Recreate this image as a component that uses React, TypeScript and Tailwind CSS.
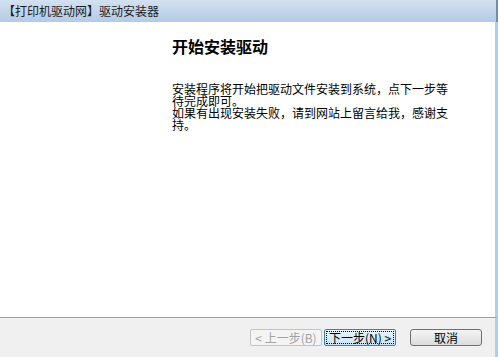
import React from 'react';

const font = { fontFamily: '"Noto Sans CJK SC", "Liberation Sans", sans-serif' };

const App: React.FC = () => {
  return (
    <div className="w-[498px] h-[357px] flex flex-col overflow-hidden bg-white" style={font}>
      {/* Title bar */}
      <div className="h-[22px] flex items-center pl-[3px] bg-gradient-to-b from-[#d3e1f1] to-[#b3cae5] border-r-2 border-[#6f8fae]">
        <span className="text-[12px] leading-none text-[#1b1b1b]">【打印机驱动网】驱动安装器</span>
      </div>

      {/* Body */}
      <div className="flex-1 flex border-r-[3px] border-[#a6d2ee]">
        <div className="pl-[172px] pt-[14px] flex flex-col items-start">
          <h1 className="text-[16px] leading-[20px] font-bold text-black">开始安装驱动</h1>
          <div className="mt-[27px] flex flex-col text-[12px] leading-[12px] text-black">
            <span>安装程序将开始把驱动文件安装到系统，点下一步等</span>
            <span>待完成即可。</span>
            <span>如果有出现安装失败，请到网站上留言给我，感谢支</span>
            <span>持。</span>
          </div>
        </div>
      </div>

      {/* Footer */}
      <div className="h-[40px] border-t border-[#a0a0a0] bg-[#f0f0f0] flex items-center justify-end gap-[2px] pr-[13px] border-r-[3px] border-r-[#a6d2ee]">
        <button className="w-[72px] h-[17px] rounded-[2px] border border-[#c4c4c4] bg-[#f4f4f4] text-[12px] leading-none text-[#a3a3a3] flex items-center justify-center">
          &lt; 上一步(B)
        </button>
        <button className="w-[72px] h-[17px] rounded-[2px] border border-[#3c7fb1] bg-gradient-to-b from-[#eaf6fd] to-[#c5e4f7] p-[1px] flex">
          <span className="flex-1 border border-dotted border-black flex items-center justify-center text-[12px] leading-none text-black">
            下一步(N) &gt;
          </span>
        </button>
        <button className="ml-[12px] w-[72px] h-[17px] rounded-[3px] border border-[#707070] bg-gradient-to-b from-[#f4f4f4] to-[#dcdcdc] text-[12px] leading-none text-black flex items-center justify-center">
          取消
        </button>
      </div>
    </div>
  );
};

export default App;
